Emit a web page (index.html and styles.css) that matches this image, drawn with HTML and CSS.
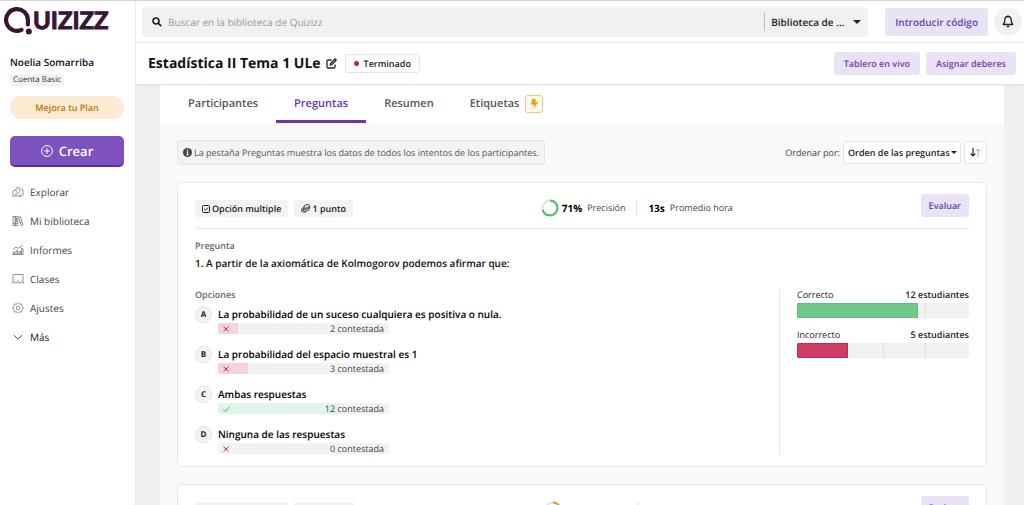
FILE: index.html
```html
<!DOCTYPE html>
<html lang="es">
<head>
<meta charset="utf-8">
<title>Estadística II Tema 1 ULe - Quizizz</title>
<link rel="stylesheet" href="styles.css">
</head>
<body>
<div class="app">
  <aside class="sidebar">
    <a class="logo" href="#" aria-label="Quizizz">
      <svg class="logo-q" width="28" height="30" viewBox="0 0 28 30" fill="none"><path d="M17.500 23.900A10.900 10.900 0 1 1 23.900 14V18.500" stroke="#381535" stroke-width="4.200" stroke-linecap="round"/><circle cx="24.800" cy="25.600" r="3" fill="#381535"/></svg>
      <span class="logo-text">UIZIZZ</span>
    </a>
    <div class="user">
      <div class="user-name">Noelia Somarriba</div>
      <span class="user-plan">Cuenta Basic</span>
    </div>
    <button class="upgrade" type="button">Mejora tu Plan</button>
    <button class="create" type="button">
      <svg width="12" height="12" viewBox="0 0 12 12" fill="none" stroke="#fff"><circle cx="6" cy="6" r="5.400"/><path d="M6 3.200v5.600M3.200 6h5.600"/></svg>
      Crear
    </button>
    <nav class="menu">
      <a href="#"><svg viewBox="0 0 12 12"><path d="M3.500 4.200L1 5v5.500l3-1 4 1 3-1V4l-2-.3M4 9.500V7M8 10.500V7.500M6 7.500C4.700 6 3.800 4.800 3.800 3.600a2.200 2.200 0 0 1 4.400 0C8.200 4.800 7.300 6 6 7.500zM6 3v1"/></svg>Explorar</a>
      <a href="#"><svg viewBox="0 0 12 12"><path d="M1 1.500h2.300v9H1zM3.300 1.500h2.400v9H3.300zM6.500 2.200l2-.6 2.500 8.300-2 .6zM1 8.500h4.700M7.800 7.500l2-.6M4.500 3v4"/></svg>Mi biblioteca</a>
      <a href="#"><svg viewBox="0 0 12 12"><path d="M1 5.500l3-2.500 2 1.500L10.500 1.500M1 10.500V8h1.500v2.500M4 10.500V6.500h1.500v4M7 10.500v-3h1.500v3M9.500 10.500V4.500H11v6M.5 10.500h11"/></svg>Informes</a>
      <a href="#"><svg viewBox="0 0 12 12"><path d="M1 8V1.500h10V8M.5 10.500V9h2.700v1.500M4.700 10.500V9h2.600v1.500M8.800 10.500V9h2.700v1.500M2 7.500v.5M6 7v1M10 7.500v.5"/></svg>Clases</a>
      <a href="#"><svg viewBox="0 0 12 12"><path d="M6 .8l1.500 1.300 2-.1.700 1.900L11.300 6l-1.100 2.100-.7 1.900-2-.1L6 11.200 4.500 9.900l-2 .1-.7-1.900L.7 6l1.100-2.100.7-1.900 2 .1z"/><circle cx="6" cy="6" r="1.800"/></svg>Ajustes</a>
      <a class="more" href="#"><svg viewBox="0 0 12 12"><path d="M2 4.200l4 4 4-4"/></svg>Más</a>
    </nav>
  </aside>

  <div class="page">
    <header class="topbar">
      <div class="search">
        <svg width="10" height="10" viewBox="0 0 10 10" fill="none" stroke="#2a1a30" stroke-width="1.700"><circle cx="4" cy="4" r="3"/><path d="M6.200 6.200L9.200 9.200"/></svg>
        <input type="text" aria-label="Buscar" placeholder="Buscar en la biblioteca de Quizizz">
        <label class="scope"><select aria-label="Biblioteca"><option>Biblioteca de ...</option></select><span class="caret"></span></label>
      </div>
      <button class="soft code" type="button">Introducir código</button>
      <button class="bell" type="button" aria-label="Notificaciones"><svg width="12" height="13" viewBox="0 0 12 13" fill="none" stroke="#222" stroke-width="1.300" stroke-linejoin="round"><path d="M6 1.500C3.800 1.500 2.800 3 2.800 5c0 2.500-.6 3.500-1.600 4.500h9.600C9.800 8.500 9.200 7.500 9.200 5 9.200 3 8.200 1.500 6 1.500zM4.800 11.500h2.400M6 .3v1.200"/></svg></button>
    </header>

    <div class="titlebar">
      <h1>Estadística II Tema 1 ULe</h1>
      <button class="edit" type="button" aria-label="Editar"><svg width="11" height="11" viewBox="0 0 11 11" fill="none" stroke="#222" stroke-width="1.300"><path d="M5.500 2H2.200Q1 2 1 3.200v5.600Q1 10 2.200 10h5.600Q9 10 9 8.800V6.500"/><path d="M4.300 7l.4-1.700L9 1l1.200 1.200L6 6.500z"/></svg></button>
      <span class="status"><i></i>Terminado</span>
      <div class="actions">
        <button class="soft" type="button">Tablero en vivo</button>
        <button class="soft" type="button">Asignar deberes</button>
      </div>
    </div>

    <main class="sheet">
      <nav class="tabs">
        <a href="#">Participantes</a>
        <a class="active" href="#">Preguntas</a>
        <a href="#">Resumen</a>
        <a href="#">Etiquetas <span class="bolt"><svg width="8" height="10" viewBox="0 0 8 10"><path d="M2 0h4L5.200 3H8L3.600 10l.9-4.500H1z" fill="#f59b0b"/></svg></span></a>
      </nav>
      <div class="content">
        <div class="toolbar">
          <p class="notice"><svg width="9" height="9" viewBox="0 0 9 9"><circle cx="4.500" cy="4.500" r="4.500" fill="#444"/><path d="M4.500 1.500v1.400M3.600 4h1v2.800M3.400 6.900h2.300" stroke="#fff" stroke-width="1.100" fill="none"/></svg>La pestaña Preguntas muestra los datos de todos los intentos de los participantes.</p>
          <div class="sort">
            <label for="order">Ordenar por:</label>
            <span class="order"><select id="order"><option>Orden de las preguntas</option></select><span class="caret small"></span></span>
            <button class="direction" type="button" aria-label="Cambiar orden"><svg width="11" height="9" viewBox="0 0 11 9" fill="none"><path d="M3 0v8M.7 5.600L3 8l2.300-2.400" stroke="#222" stroke-width="1.200"/><path d="M8 9V1M5.700 3.400L8 1l2.300 2.400" stroke="#aaa"/></svg></button>
          </div>
        </div>

        <section class="card">
          <div class="card-head">
            <span class="tag"><svg width="8" height="8" viewBox="0 0 8 8" fill="none" stroke="#222"><rect x=".5" y=".5" width="7" height="7" rx="1"/><path d="M2.200 4l1.400 1.400L6 2.600"/></svg>Opción multiple</span>
            <span class="tag"><svg width="9" height="9" viewBox="0 0 9 9" fill="none" stroke="#333" stroke-width=".9"><ellipse cx="5.600" cy="2.400" rx="2.900" ry="1.600" transform="rotate(-20 5.600 2.400)"/><path d="M2.600 3.300v3.500c1.200 1.200 4.800.2 5.800-1.500V2M2.700 5c1.300 1 4.700.2 5.700-1.300M2.500 4C.8 4.300.4 5 .6 5.600v1.600c.5 1.300 3 1.500 4.200.8M.6 5.700c.5.700 1.200.9 2 .9"/></svg>1 punto</span>
            <div class="stats">
              <svg width="18" height="18" viewBox="0 0 18 18" fill="none" stroke-width="2"><circle cx="9" cy="9" r="7.500" stroke="#e3e3e3"/><circle cx="9" cy="9" r="7.500" stroke="#4dbb6c" pathLength="100" stroke-dasharray="71 29" transform="rotate(-90 9 9)"/></svg>
              <b>71%</b><span>Precisión</span>
              <hr>
              <b>13s</b><span>Promedio hora</span>
            </div>
            <button class="soft evaluate" type="button">Evaluar</button>
          </div>
          <div class="question">
            <div class="label">Pregunta</div>
            <h2>1. A partir de la axiomática de Kolmogorov podemos afirmar que:</h2>
          </div>
          <div class="results">
            <div class="options">
              <div class="label">Opciones</div>
              <ol>
                <li><span class="letter">A</span><div><p>La probabilidad de un suceso cualquiera es positiva o nula.</p><div class="bar"><div class="fill wrong" style="width:11.8%"></div><svg viewBox="0 0 8 8" stroke="#d52b5b"><path d="M1.500 1.500l5 5M6.500 1.500l-5 5"/></svg><span>2 contestada</span></div></div></li>
                <li><span class="letter">B</span><div><p>La probabilidad del espacio muestral es 1</p><div class="bar"><div class="fill wrong" style="width:17.6%"></div><svg viewBox="0 0 8 8" stroke="#d52b5b"><path d="M1.500 1.500l5 5M6.500 1.500l-5 5"/></svg><span>3 contestada</span></div></div></li>
                <li><span class="letter">C</span><div><p>Ambas respuestas</p><div class="bar"><div class="fill right" style="width:70.6%"></div><svg viewBox="0 0 8 8" stroke="#36b05c"><path d="M1 4.500l2.200 2.200L7.600 1.800"/></svg><span>12 contestada</span></div></div></li>
                <li><span class="letter">D</span><div><p>Ninguna de las respuestas</p><div class="bar"><svg viewBox="0 0 8 8" stroke="#d52b5b"><path d="M1.500 1.500l5 5M6.500 1.500l-5 5"/></svg><span>0 contestada</span></div></div></li>
              </ol>
            </div>
            <div class="summary">
              <div class="summary-row"><span>Correcto</span><b>12 estudiantes</b></div>
              <div class="meter"><div class="good" style="width:70.6%"></div></div>
              <div class="summary-row"><span>Incorrecto</span><b>5 estudiantes</b></div>
              <div class="meter"><div class="bad" style="width:29.4%"></div></div>
            </div>
          </div>
        </section>

        <section class="card">
          <div class="card-head">
            <span class="tag tag-type"></span>
            <span class="tag tag-points"></span>
            <div class="stats">
              <svg width="18" height="18" viewBox="0 0 18 18" fill="none" stroke-width="2"><circle cx="9" cy="9" r="7.500" stroke="#e3e3e3"/><circle cx="9" cy="9" r="7.500" stroke="#e9a01c" pathLength="100" stroke-dasharray="50 50" transform="rotate(-90 9 9)"/></svg>
              <span class="stat-space"></span>
              <hr>
              <span class="stat-space"></span>
            </div>
            <button class="soft evaluate" type="button">Evaluar</button>
          </div>
        </section>
      </div>
    </main>
  </div>
</div>
</body>
</html>
```

FILE: styles.css
```css
* { box-sizing: border-box; }
body {
  margin: 0;
  font: 10px/14px "Open Sans", "Noto Sans", sans-serif;
  color: #222;
  background: #f0f0f0;
  text-rendering: geometricPrecision;
}
h1, h2, p, ol { margin: 0; padding: 0; }
ol { list-style: none; }
a { color: inherit; text-decoration: none; }
svg { flex: none; }
button, select { font: inherit; text-rendering: inherit; color: inherit; border: 0; padding: 0; background: none; }
button { display: flex; align-items: center; justify-content: center; }
select { appearance: none; outline: 0; }
b { font-weight: 600; }

.app { display: flex; height: 100vh; overflow: hidden; border-top: 1px solid #d4d4d4; }
.sidebar { flex: none; width: 136px; padding: 5px 11px 0 10px; background: #fff; border-right: 1px solid #ededed; }
.page { flex: 1; min-width: 0; display: flex; flex-direction: column; }

.logo { display: flex; align-items: flex-start; margin-left: -6px; height: 48px; }
.logo-text { margin-left: 1px; font: 700 24px/30px Lato, sans-serif; color: #381535; -webkit-text-stroke: 1px #381535; }
.user-name { font-size: 10px; line-height: 16px; font-weight: 600; color: #111; }
.user-plan { display: inline-block; margin-top: 4px; padding: 0 3px; border-radius: 3px; background: #f2f2f2; font-size: 8px; line-height: 12px; font-weight: 400; color: #333; }
.upgrade { width: 100%; height: 23px; margin-top: 10px; border-radius: 12px; background: #fbebd3; color: #b9770e; font-size: 9px; font-weight: 600; }
.create { width: 100%; height: 31px; margin-top: 17px; gap: 6px; border-radius: 5px; background: #7d52bd; border-bottom: 2px solid #55309b; color: #fff; font-size: 13px; font-weight: 600; }
.menu { margin-top: 10px; font-size: 10px; color: #444; }
.menu a { display: flex; align-items: center; gap: 6px; height: 29px; padding-left: 2px; }
.menu svg { width: 12px; height: 12px; fill: none; stroke: #777; stroke-width: .8; }
.menu .more { color: #222; }
.menu .more svg { stroke: #444; stroke-width: 1; }

.topbar { flex: none; display: flex; align-items: center; height: 42px; padding: 0 2px 0 6px; background: #fff; border-bottom: 1px solid #e8e8e8; }
.search { flex: 1; display: flex; align-items: center; height: 30px; padding: 0 7px 0 10px; border-radius: 3px; background: #f1f1f1; }
.search input { flex: 1; min-width: 0; margin-left: 6px; padding: 0; border: 0; outline: 0; background: none; font: inherit; font-size: 10px; text-rendering: inherit; }
.search input::placeholder { color: #999; opacity: 1; }
.scope { display: flex; align-items: center; gap: 8px; height: 18px; padding-left: 6px; border-left: 1px solid #bbb; font-size: 10px; font-weight: 600; }
.caret { border: 4px solid transparent; border-top-color: #222; border-bottom: 0; }
.caret.small { border-width: 3px; border-bottom: 0; margin-left: 1px; }
.soft { border-radius: 3px; background: #e9e3f5; color: #6b3fb8; font-weight: 600; }
.code { height: 28px; margin: 0 6px 0 17px; padding: 0 10px; font-size: 10px; }
.bell { width: 28px; height: 28px; border-radius: 14px; background: #f1f1f1; }

.titlebar { flex: none; display: flex; align-items: center; height: 42px; padding: 0 8px 0 12px; background: #fff; border-bottom: 1px solid #e2e2e2; box-shadow: 0 1px 2px #0000000d; z-index: 1; }
.titlebar h1 { font-size: 14px; line-height: 22px; font-weight: 700; color: #111; }
.edit { margin: 0 8px 0 5px; }
.status { display: flex; align-items: center; gap: 5px; height: 19px; padding: 0 8px; border: 1px solid #e5e5e5; border-radius: 3px; font-size: 9px; font-weight: 600; }
.status i { width: 5px; height: 5px; border-radius: 50%; background: #cf1b3b; }
.actions { display: flex; gap: 6px; margin-left: auto; }
.actions .soft { height: 23px; padding: 0 10px; font-size: 9px; }

.sheet { flex: 1; min-height: 0; margin: 0 20px 0 24px; background: #f9f9f9; overflow: hidden; }
.tabs { display: flex; height: 38px; padding-left: 10px; background: #fff; font-size: 11px; font-weight: 600; color: #555; }
.tabs a { display: flex; align-items: center; gap: 6px; padding: 2px 18px 0; border-bottom: 3px solid transparent; }
.tabs .active { color: #6a35b5; border-color: #6a35b5; }
.bolt { display: flex; align-items: center; justify-content: center; width: 18px; height: 18px; border: 1px solid #f3c77d; border-radius: 3px; background: #fff8ec; }
.content { padding: 17px; }
.toolbar { display: flex; align-items: center; justify-content: space-between; }
.notice { display: flex; align-items: center; gap: 2px; height: 25px; padding: 0 5px; border: 1px solid #e6e6e6; border-radius: 3px; background: #f3f3f3; font-size: 9px; color: #555; }
.sort { display: flex; align-items: center; gap: 3px; font-size: 9px; color: #444; }
.order, .direction { height: 23px; border: 1px solid #e5e5e5; border-radius: 3px; background: #fff; color: #222; font-weight: 600; }
.order { display: flex; align-items: center; padding: 0 3px 0 4px; }
.direction { width: 23px; }

.card { margin-top: 17px; padding: 11px 17px; border: 1px solid #e7e7e7; border-radius: 6px; background: #fff; }
.card-head { display: flex; align-items: flex-start; gap: 6px; height: 35px; border-bottom: 1px solid #ebebeb; }
.tag { display: flex; align-items: center; gap: 2px; height: 17px; margin-top: 6px; padding: 0 7px; border-radius: 2px; background: #f2f2f2; font-size: 9px; font-weight: 600; color: #222; }
.tag-type { width: 93px; }
.tag-points { width: 60px; }
.stats { flex: 1; display: flex; align-items: center; justify-content: center; height: 18px; margin-top: 5px; font-size: 9px; color: #444; }
.stats b { margin: 0 5px 0 3px; font-size: 10px; font-weight: 700; color: #000; }
.stats hr { width: 1px; height: 16px; margin: 0 11px; border: 0; background: #e5e5e5; }
.stats hr + b { margin-left: 0; }
.stat-space { width: 64px; }
.stat-space:last-child { width: 82px; }
.evaluate { height: 23px; padding: 0 8px; font-size: 9px; }
.label { font-size: 9px; line-height: 12px; font-weight: 600; color: #666; }
.question { padding: 11px 0 18px; }
.question h2 { margin-top: 3px; font-size: 10px; line-height: 16px; font-weight: 600; color: #111; }
.results { display: flex; }
.options { flex: 1; }
.options li { display: flex; gap: 6px; height: 40px; }
.options ol { padding-top: 5px; height: 154px; }
.letter { display: flex; align-items: center; justify-content: center; width: 17px; height: 17px; border: 1px solid #e4e4e4; border-radius: 50%; background: #f3f3f3; font-size: 8px; font-weight: 700; }
.options p { font-size: 10px; line-height: 17px; font-weight: 600; color: #000; }
.bar { position: relative; display: flex; align-items: center; width: 171px; height: 11px; padding: 0 5px 0 4px; border-radius: 2px; background: #f2f2f2; font-size: 9px; line-height: 11px; color: #444; overflow: hidden; }
.bar svg { width: 8px; height: 8px; fill: none; position: relative; }
.bar span { position: relative; margin-left: auto; }
.fill { position: absolute; inset: 0 auto 0 0; }
.wrong { background: #f4d3de; }
.right { background: #dff5e9; }
.summary { width: 190px; padding-left: 17px; border-left: 1px solid #e6e6e6; font-size: 9px; }
.summary-row { display: flex; justify-content: space-between; line-height: 12px; }
.meter { position: relative; height: 15px; margin: 2px 0 11px; border-radius: 2px; overflow: hidden; background: #f1f1f1; }
.meter::before { content: ""; position: absolute; inset: 0 25% 0 50%; border: dashed #dadada; border-width: 0 1px; }
.meter div { position: relative; height: 100%; }
.good { background: #70c988; border: 1px solid #5cc07a; }
.bad { background: #d03c68; border: 1px solid #d02456; }
```
